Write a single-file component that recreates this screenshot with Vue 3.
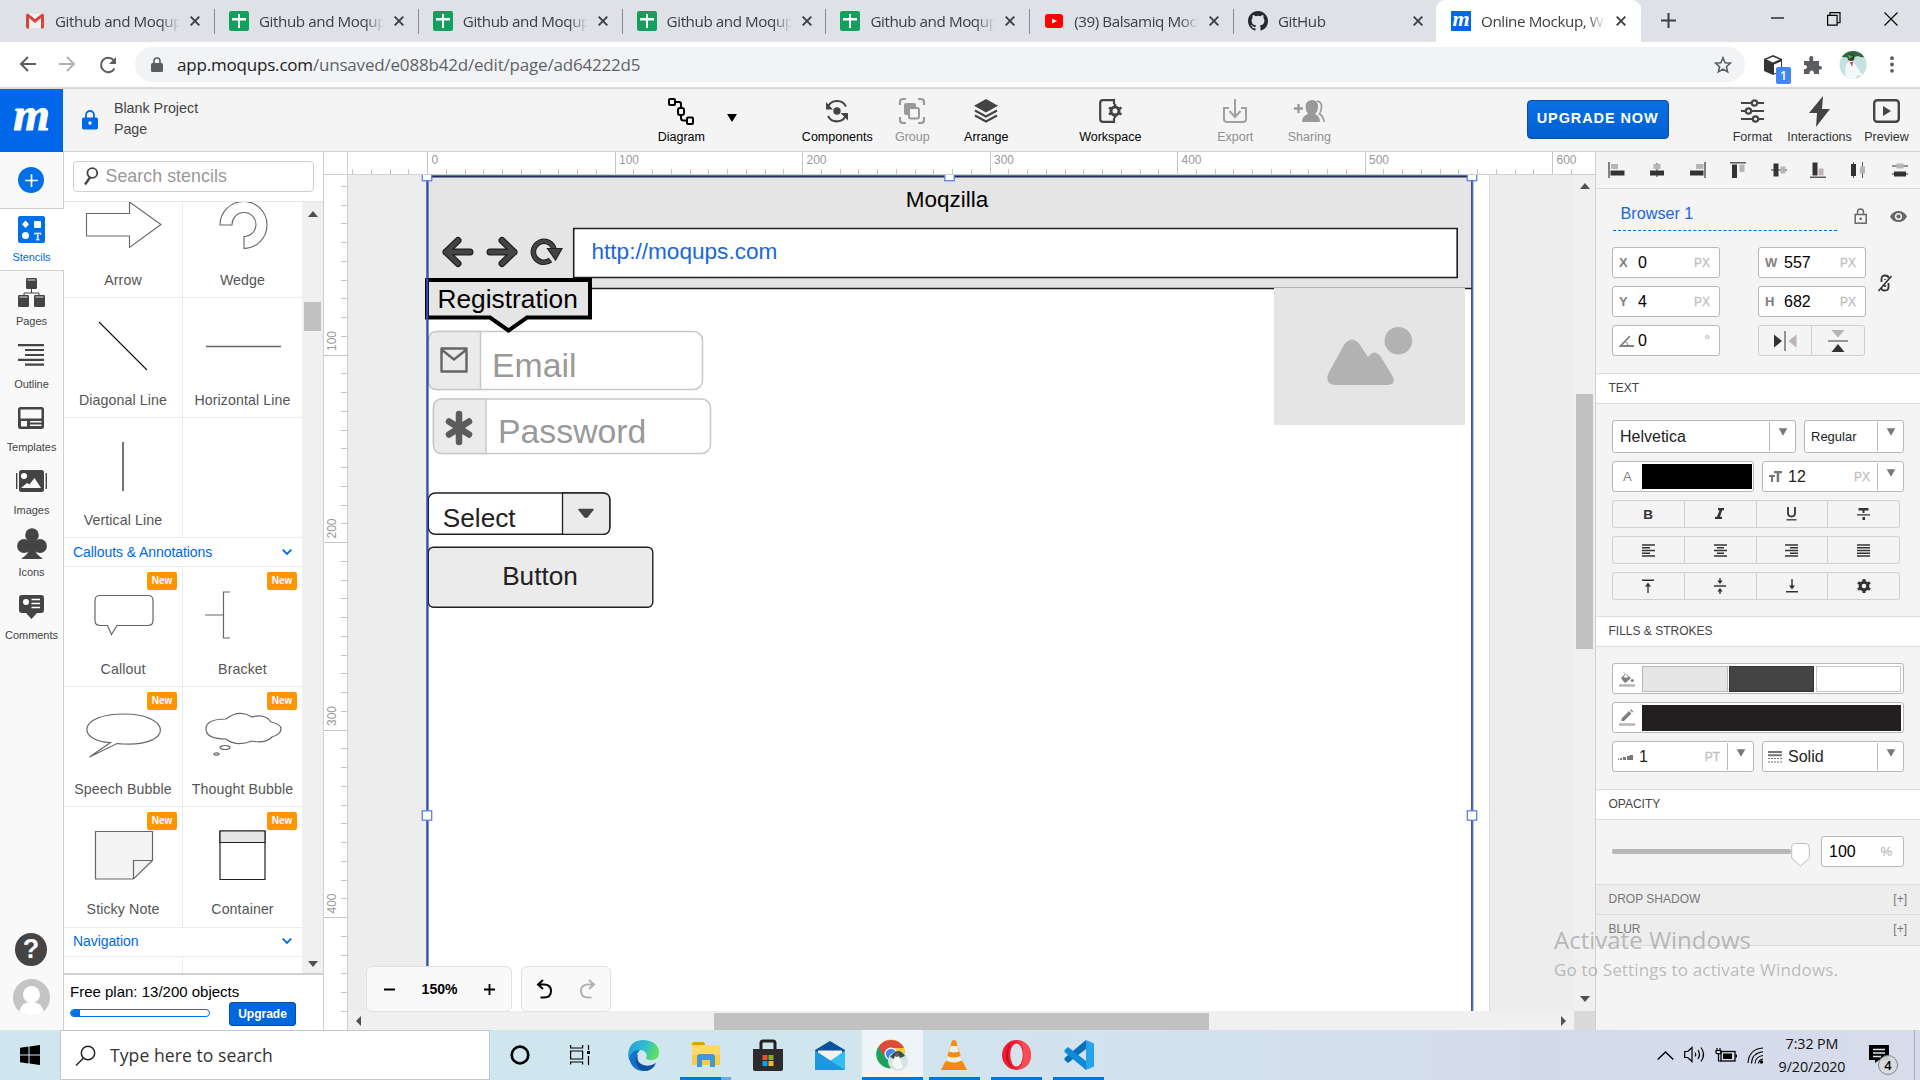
<script setup>
import { h } from 'vue'

/* name: [width, height, svg body] */
const icons = {
  gmail: [18, 16, '<path d="M1 1h16v14H1z" fill="#f2f2f2"/><path d="M0 2v12q0 2 3 1.500V5l6 5 6-5v10.500q3 .5 3-1.500V2Q17 0 15.500 1L9 6 2.500 1Q1 0 0 2z" fill="#d6453a"/>'],
  sheets: [20, 20, '<rect width="20" height="20" rx="2" fill="#12a05c"/><path d="M9 3h2v4h6v2.500h-6V17H9V9.500H3V7h6z" fill="#fff"/>'],
  youtube: [18, 14, '<rect width="18" height="14" rx="3" fill="#f00"/><path d="M7 4.500v5l5-2.500z" fill="#fff"/>'],
  github: [20, 20, '<path transform="scale(1.25)" d="M8 0C3.580 0 0 3.580 0 8c0 3.540 2.290 6.530 5.470 7.590.4.070.55-.17.55-.38 0-.19-.010-.82-.010-1.490-2.010.37-2.530-.49-2.690-.94-.090-.23-.48-.94-.82-1.130-.28-.15-.68-.52-.010-.53.63-.010 1.080.58 1.230.82.72 1.210 1.870.87 2.330.66.070-.52.28-.87.51-1.070-1.780-.2-3.640-.89-3.640-3.950 0-.87.31-1.590.82-2.150-.080-.2-.36-1.020.080-2.120 0 0 .67-.21 2.200.82a7.600 7.600 0 0 1 4 0c1.530-1.040 2.200-.82 2.200-.82.44 1.100.16 1.920.080 2.120.51.56.82 1.270.82 2.150 0 3.070-1.870 3.750-3.650 3.950.29.25.54.73.54 1.480 0 1.070-.010 1.930-.010 2.200 0 .21.15.46.55.38A8 8 0 0 0 16 8c0-4.420-3.580-8-8-8z" fill="#24292e"/>'],
  x: [10, 10, '<path d="M.7.7l8.600 8.600M9.300.7L.7 9.300" stroke="currentColor" stroke-width="1.900"/>'],
  plus: [15, 15, '<path d="M7.500 0v15M0 7.500h15" stroke="currentColor" stroke-width="2"/>'],
  back: [17, 16, '<path d="M17 8H2M9 1L2 8l7 7" fill="none" stroke="currentColor" stroke-width="2"/>'],
  fwd: [17, 16, '<path d="M0 8h15M8 1l7 7-7 7" fill="none" stroke="currentColor" stroke-width="2"/>'],
  reload: [18, 18, '<path d="M15.500 12.500A7.200 7.200 0 1 1 14.500 4" fill="none" stroke="currentColor" stroke-width="2"/><path d="M17 1v7h-7z"/>'],
  lock: [12, 15, '<rect y="6" width="12" height="9" rx="1.500"/><path d="M3 6.500V4a3 3 0 0 1 6 0v2.500" fill="none" stroke="currentColor" stroke-width="1.600"/>'],
  bluelock: [16, 20, '<rect y="7.500" width="16" height="12" rx="1.800"/><path d="M4 8V5a4 4 0 0 1 8 0v3" fill="none" stroke="currentColor" stroke-width="1.800"/><circle cx="8" cy="13" r="1.700" fill="#fff"/>'],
  star: [18, 18, '<path d="M9 1.800l2.100 4.900 5.300.5-4 3.500 1.200 5.200L9 13.100l-4.600 2.800 1.200-5.200-4-3.500 5.300-.5z" fill="none" stroke="currentColor" stroke-width="1.600"/>'],
  cube: [20, 20, '<path d="M10 0l9 4v12l-9 4-9-4V4z" fill="#333"/><path d="M10 1.800L16.500 4.500 10 7.500 3.500 4.500z" fill="#fff"/><path d="M11 9.500l7-3v9l-7 3z" fill="#fff"/>'],
  puzzle: [18, 18, '<path d="M0 5h5.500q-1-5 1.800-5T9 5h6v5q3-.5 3 1.700T15 13.500V18h-5q0-3.500-2.300-3.500T5.500 18H0v-5q3 0 3-2T0 9z"/>'],
  dots: [4, 17, '<circle cx="2" cy="2.200" r="1.900"/><circle cx="2" cy="8.500" r="1.900"/><circle cx="2" cy="14.800" r="1.900"/>'],
  wmin: [13, 13, '<path d="M0 6h13" stroke="#000" stroke-width="1.200"/>'],
  wmax: [14, 14, '<path d="M.6 3.400h9.500v9.800H.6zM3 3V.7h10v10h-2.500" fill="none" stroke="#000" stroke-width="1.200"/>'],
  wclose: [14, 14, '<path d="M.5.5l13 13M13.500.5l-13 13" stroke="#000" stroke-width="1.100"/>'],
  diagram: [26, 27, '<g fill="none" stroke="#000" stroke-width="2"><rect x="1" y="1" width="6" height="6" rx="1"/><rect x="10" y="10" width="6" height="7" rx="2"/><rect x="19" y="19.500" width="6" height="6.500" rx="1"/><path d="M8 4h3q2 0 2 2v4M13 17v3q0 2.500 2.500 2.500H19"/></g>'],
  components: [24, 24, '<circle cx="12" cy="12" r="3.700"/><path d="M2.500 9A10 10 0 0 1 21 7.500M21.500 15A10 10 0 0 1 3 17" fill="none" stroke="currentColor" stroke-width="2"/><path d="M1 3v7.500h7zM23 21.500V14h-7.500z"/>'],
  group: [26, 26, '<path d="M1 7V4q0-3 3-3h3M19 1h3q3 0 3 3v3M25 19v3q0 3-3 3h-3M7 25H4q-3 0-3-3v-3" fill="none" stroke="currentColor" stroke-width="2.200"/><rect x="5" y="5" width="12" height="12" rx="2"/><rect x="10" y="10" width="10" height="10.500" rx="2" fill="#f4f4f4" stroke="currentColor" stroke-width="2"/>'],
  arrange: [24, 24, '<path d="M12 0l12 6.700-12 6.700L0 6.700z"/><path d="M1 11.500l11 6 11-6M1 16.500l11 6 11-6" fill="none" stroke="currentColor" stroke-width="2"/>'],
  workspace: [23, 24, '<path d="M15 5V1.200H4Q1.200 1.200 1.200 4v16q0 2.800 2.800 2.800h11V19" fill="none" stroke="currentColor" stroke-width="2.200"/><circle cx="16" cy="12" r="4" fill="none" stroke="currentColor" stroke-width="3"/><path d="M16 5v3M16 16v3M10 8.500l2 1.500M20 14l2.500 1.500M22.500 8.500L20 10M12 14l-2 1.500" stroke="currentColor" stroke-width="2.500"/>'],
  export: [24, 24, '<path d="M12 0v17M6.500 12l5.500 6 5.500-6M6 9H1v11q0 3 3 3h16q3 0 3-3V9h-5" fill="none" stroke="currentColor" stroke-width="2"/>'],
  sharing: [31, 22, '<path d="M0 8.500h9M4.500 4v9" stroke="currentColor" stroke-width="2.400"/><path d="M18 0q6 0 6 6t-3 8q5 2 5 8H8q0-6 6-8-2.500-3-2.500-8T18 0z"/><path d="M23 1q5 1 4.500 6t-2 7q4 2 4.500 8" fill="none" stroke="currentColor" stroke-width="1.600"/>'],
  format: [23, 24, '<g fill="none" stroke="currentColor" stroke-width="2.200"><path d="M0 4h10M17 4h6M0 12h4M11 12h12M0 20h11M18 20h5"/><circle cx="13.500" cy="4" r="2.700"/><circle cx="7.500" cy="12" r="2.700"/><circle cx="14.500" cy="20" r="2.700"/></g>'],
  bolt: [21, 31, '<path d="M14 0L0 17h8L7 31l14-18h-8z"/>'],
  preview: [27, 24, '<rect x="1.200" y="1.200" width="24.600" height="21.600" rx="3" fill="none" stroke="currentColor" stroke-width="2.400"/><path d="M10 7v10l8-5z"/>'],
  pages: [27, 29, '<rect x="8" width="11" height="11" rx="1.200"/><path d="M9.500 2h8" stroke="#ddd"/><path d="M13.500 11v4M6 18v-3h15v3" fill="none" stroke="currentColor"/><rect y="17" width="11" height="12" rx="1.200"/><rect x="16" y="17" width="11" height="12" rx="1.200"/><path d="M1.500 19h8M17.500 19h8" stroke="#ddd"/>'],
  outline: [27, 22, '<path d="M0 1.200h26M7 6h19M7 11h19M0 15.800h26M7 20.700h19" stroke="currentColor" stroke-width="2.200"/>'],
  templates: [27, 22, '<rect width="26" height="22" rx="2.500"/><path d="M2.500 2.500h21v9h-21zM3 14h6v5.500H3zM12 14h11.500v1.500H12zM12 17.500h11.500v1.500H12z" fill="#f9f9f9"/>'],
  images: [31, 22, '<path d="M.7 3v16M30.300 3v16" stroke="currentColor" stroke-width="1.400"/><rect x="3" width="25" height="22" rx="2.500"/><circle cx="8" cy="6" r="3" fill="#fff"/><path d="M5 18l6-5 2.500 1.500L18.500 8 25 18z" fill="#fff"/>'],
  club: [30, 31, '<circle cx="15" cy="7" r="6.800"/><circle cx="7" cy="18" r="6.900"/><circle cx="23" cy="18" r="6.900"/><path d="M12 10h6l2 8q-3.500 4 1 9 3 2.500 5 4H4q2-1.500 5-4 4.500-5 1-9z"/>'],
  comments: [25, 24, '<path d="M3 0h19q3 0 3 3v12q0 3-3 3h-4l-5.500 6L7 18H3q-3 0-3-3V3q0-3 3-3z"/><circle cx="7" cy="7" r="3" fill="#fff"/><path d="M12.500 4.500H21M12.500 8.500H21M12.500 12.500H21" stroke="#fff" stroke-width="1.300"/>'],
  stencils: [27, 27, '<rect width="27" height="27" rx="2" fill="#0070e8"/><path d="M7.500 4.500L11 8.300l-3.500 3.800L4 8.300z" fill="#fff"/><rect x="16" y="5" width="7" height="7" rx="1" fill="#fff"/><circle cx="7.500" cy="19.500" r="3.500" fill="#fff"/><text x="19.500" y="23.500" text-anchor="middle" font-family="Liberation Serif, serif" font-size="11" fill="#fff" stroke="#fff" stroke-width=".3">T</text>'],
  mag: [14, 19, '<circle cx="8.300" cy="6" r="4.900" fill="none" stroke="currentColor" stroke-width="1.800"/><path d="M6 10.500L1 17.500" stroke="currentColor" stroke-width="2.300"/>'],
  chev: [10, 6, '<path d="M.7.7L5 5l4.300-4.300" fill="none" stroke="currentColor" stroke-width="1.800"/>'],
  tri: [10, 8, '<path d="M0 0h10L5 8z"/>'],
  sUp: [10, 6, '<path d="M5 0L0 6h10z"/>'],
  sDn: [10, 6, '<path d="M0 0h10L5 6z"/>'],
  sL: [5, 10, '<path d="M5 0v10L0 5z"/>'],
  sR: [5, 10, '<path d="M0 0v10l5-5z"/>'],
  undo: [16, 20, '<path d="M7 1L2 5.500 7 10M2 5.500h6q7 0 7 6.500t-7 6.500H4.500" fill="none" stroke="currentColor" stroke-width="2"/>'],
  redo: [16, 20, '<path d="M9 1l5 4.500L9 10M14 5.500H8q-7 0-7 6.500t7 6.500h3.500" fill="none" stroke="currentColor" stroke-width="2"/>'],
  minus: [11, 11, '<path d="M0 5.500h11" stroke="currentColor" stroke-width="2"/>'],
  plus2: [11, 11, '<path d="M0 5.500h11M5.500 0v11" stroke="currentColor" stroke-width="1.800"/>'],
  unlock: [14, 16, '<rect x="1.200" y="6.500" width="11" height="8.700" fill="none" stroke="currentColor" stroke-width="1.500"/><path d="M3.500 6V4Q3.500 1 6.500 1t3 3v2" fill="none" stroke="currentColor" stroke-width="1.400"/><circle cx="6.700" cy="10.800" r="1.300"/>'],
  eye: [17, 11, '<path d="M0 5.500Q3 0 8.500 0T17 5.500Q14 11 8.500 11T0 5.500z"/><circle cx="8.500" cy="5.500" r="3.600" fill="#f4f4f4"/><circle cx="8.500" cy="5.500" r="2.100"/>'],
  unlink: [14, 18, '<path d="M3.500 8V5q0-3.500 3.500-3.500T10.500 4M10.500 9v4q0 3.500-3.500 3.500T3.500 14" fill="none" stroke="currentColor" stroke-width="1.800"/><path d="M7 5v1M7 11v2M13.500 2L.5 17" stroke="currentColor" stroke-width="1.600"/>'],
  al1: [18, 16, '<path d="M1 0v16" stroke="#333" stroke-width="1.200"/><path d="M3 2h7v5H3z" fill="#bab4b2"/><path d="M2.500 8.500h14v5h-14z"/>'],
  al2: [18, 16, '<path d="M9 1v14" stroke="#333"/><path d="M5.500 2h7v5h-7z" fill="#bab4b2"/><path d="M2 8.500h14v5H2z"/>'],
  al3: [18, 16, '<path d="M17 0v16" stroke="#333" stroke-width="1.200"/><path d="M8 2h7.500v5H8z" fill="#bab4b2"/><path d="M2 8.500h13.500v5H2z"/>'],
  al4: [18, 16, '<path d="M1 .8h16" stroke="#333" stroke-width="1.200"/><path d="M10.500 2.500h5V10h-5z" fill="#bab4b2"/><path d="M3 2.500h5V16H3z"/>'],
  al5: [18, 16, '<path d="M1 8h16" stroke="#333"/><path d="M10.500 4.500h5v7h-5z" fill="#bab4b2"/><path d="M3.500 1.500h5v13h-5z"/>'],
  al6: [18, 16, '<path d="M1 15.200h16" stroke="#333" stroke-width="1.200"/><path d="M9.500 6.500h5v7h-5z" fill="#bab4b2"/><path d="M3.500.5h5v13h-5z"/>'],
  al7: [18, 16, '<path d="M4.500 0v16M13.500 0v16" stroke="#555"/><path d="M11 4.500h5v7h-5z" fill="#bab4b2"/><path d="M2 2h5v12H2z"/>'],
  al8: [18, 16, '<path d="M1 4h16M1 12h16" stroke="#333"/><path d="M5.500 1.500h7v5h-7z" fill="#bab4b2"/><path d="M3 9.500h12v5H3z"/>'],
  flipH: [24, 20, '<path d="M1 3.500v13L9 10z"/><path d="M12 0v20" stroke="#333"/><path d="M23.500 3.500v13l-8-6.500z" fill="#bab4b2"/>'],
  flipV: [20, 22, '<path d="M3.500 0h13L10 7.500z" fill="#bab4b2"/><path d="M0 11h20" stroke="#777" stroke-width="1.500"/><path d="M3.500 22h13L10 14z"/>'],
  angle: [15, 12, '<path d="M15 11H1.500L11 1" fill="none" stroke="currentColor" stroke-width="1.800"/><path d="M5 6q4 1 4 5" fill="none" stroke="currentColor"/>'],
  tT: [13, 11, '<path d="M5 0h8v2.200h-2.800V11H7.700V2.200H5zM0 4h6v2H4v5H2V6H0z"/>'],
  bold: [10, 12, '<text x="5" y="11" text-anchor="middle" font-family="Liberation Sans, sans-serif" font-weight="700" font-size="13.500">B</text>'],
  ital: [10, 12, '<path d="M3 0h6v2.200H7.200L5 8.800h2V11H0V8.800h2L4.500 2.200H3z"/>'],
  under: [11, 14, '<path d="M2 0v6q0 3.500 3.500 3.500T9 6V0" fill="none" stroke="currentColor" stroke-width="1.800"/><path d="M.5 12.800h10" stroke="currentColor" stroke-width="1.300"/>'],
  strike: [13, 12, '<path d="M1.500 0h10v2.500h-4V5h-2V2.500h-4zM5.500 9h2.500v3H5.500zM0 6.200h13v1.400H0z"/>'],
  tl: [13, 13, '<path d="M0 1h13M0 3.800h8M0 6.500h13M0 9.200h8M0 12h13" stroke="currentColor" stroke-width="1.400"/>'],
  tc: [13, 13, '<path d="M0 1h13M3 3.800h7M0 6.500h13M3 9.200h7M0 12h13" stroke="currentColor" stroke-width="1.400"/>'],
  tr: [13, 13, '<path d="M0 1h13M5 3.800h8M0 6.500h13M5 9.200h8M0 12h13" stroke="currentColor" stroke-width="1.400"/>'],
  tj: [13, 13, '<path d="M0 1h13M0 3.800h13M0 6.500h13M0 9.200h13M0 12h13" stroke="currentColor" stroke-width="1.400"/>'],
  vt: [12, 14, '<path d="M0 1.200h12M6 14V5" stroke="currentColor" stroke-width="1.400"/><path d="M6 3.500l3 4H3z"/>'],
  vm: [12, 16, '<path d="M0 8h12M6 0v3M6 16v-3" stroke="currentColor" stroke-width="1.400"/><path d="M6 6L3.300 2.500h5.400zM6 10l-2.700 3.500h5.400z"/>'],
  vb: [12, 14, '<path d="M0 12.800h12M6 0v9" stroke="currentColor" stroke-width="1.400"/><path d="M6 10.500L3 6.500h6z"/>'],
  gear: [14, 14, '<circle cx="7" cy="7" r="3.800" fill="none" stroke="currentColor" stroke-width="3"/><path d="M7 0v3M7 11v3M1 3.500L3.500 5M10.500 9L13 10.500M13 3.500L10.500 5M3.500 9L1 10.500" stroke="currentColor" stroke-width="3"/>'],
  bucket: [16, 17, '<path d="M3 1l9 7-5 4.500Q6 13 5 12L2 8l4-4z"/><path d="M4.500 7.500h5L6.500 4z" fill="#fff"/><circle cx="13.300" cy="10.500" r="1.500"/><path d="M0 15.500h16" stroke="#bab4b2" stroke-width="2.500"/>'],
  pencil: [16, 17, '<path d="M2.500 12V9.500L10 2l2.500 2.500L5 12zM11 1l1-.8 2.300 2.300-1 1z"/><path d="M0 15.500h16" stroke="#bab4b2" stroke-width="2.500"/>'],
  weight: [15, 6, '<path d="M0 4.500h1V6H0zM2 4h2v2H2zM5 3h3v3H5zM9 2h2.500v4H9zM11.500 1H15v5h-3.500z"/>'],
  lines: [14, 12, '<path d="M0 1h14M0 4.200h14" stroke="#777" stroke-width="1.900"/><path d="M0 7.500h14M0 11h14" stroke="#777" stroke-width="1.200" stroke-dasharray="2 1"/>'],
  win: [20, 20, '<path d="M0 2.800L8.500 1.600V9.600H0zM9.500 1.400L20 0v9.600H9.500zM0 10.500h8.500v8L0 17.300zM9.500 10.500H20V20L9.500 18.600z" fill="#000"/>'],
  search: [21, 21, '<circle cx="13" cy="8" r="6.700" fill="none" stroke="#222" stroke-width="1.500"/><path d="M8.500 13L1 20.500" stroke="#222" stroke-width="1.500"/>'],
  cortana: [20, 20, '<circle cx="10" cy="10" r="8.300" fill="none" stroke="#000" stroke-width="2.700"/>'],
  taskview: [21, 20, '<path d="M.6 0v3h12V0M.6 6h12v8H.6zM.6 19.500V17h12v2.500M18.500 0v5M18.500 11v9" fill="none" stroke="#000" stroke-width="1.200"/><path d="M17 6h3v3h-3z"/>'],
  edge: [31, 31, '<defs><linearGradient id="eg" x2="1" y2=".3"><stop offset="0" stop-color="#2399d8"/><stop offset=".6" stop-color="#30bfd0"/><stop offset="1" stop-color="#5ede5f"/></linearGradient></defs><path d="M0 15Q1 0 16 0q14 1 15 12 0 8-8 8-5 0-5-2 1.500-2 0-5-2-3-6-3Q4 11 2 21 0 18 0 15z" fill="url(#eg)"/><path d="M1 18Q4 9 12 10q-5 5-3 11 3 7 11 6 5-.5 8-4-4 8-12 8Q4 31 1 18z" fill="#1273c9"/><path d="M10 14q-2 7 3 10 7 4 15-1-4 8-11 8-7-1-9-8-1-6 2-9z" fill="#0c4fa0"/>'],
  folder: [28, 26, '<path d="M0 2q0-2 2-2h9q2 0 2 3h-13z" fill="#e2a100"/><path d="M0 3h28v20H0z" fill="#ffd968"/><path d="M0 13h28v10H0z" fill="#fdca48"/><path d="M5 25V15q0-3 3-3h12q3 0 3 3v10h-5v-7h-8v7z" fill="#3f97dd"/>'],
  store: [30, 31, '<path d="M8 9V3q0-2 2-2h10q2 0 2 2v6" fill="none" stroke="#222" stroke-width="3"/><path d="M0 9h30v20q0 2-2 2H2q-2 0-2-2z" fill="#2c2c2c"/><path d="M9.500 15h5v5h-5z" fill="#f25022"/><path d="M15.500 15h5v5h-5z" fill="#7fba00"/><path d="M9.500 21h5v5h-5z" fill="#00a4ef"/><path d="M15.500 21h5v5h-5z" fill="#ffb900"/>'],
  mail: [30, 29, '<path d="M0 9l15-9 15 9v4H0z" fill="#0a529c"/><path d="M3 9.500h24v8L15 22 3 17z" fill="#f3f3f3"/><path d="M0 9.500L15 20 30 9.500V29H0z" fill="#35bdf0"/><path d="M0 9.500L30 29H0z" fill="#1e96e0"/>'],
  chrome: [32, 32, '<circle cx="15" cy="15" r="14.500" fill="#fbc934"/><path d="M2 9A14.500 14.500 0 0 1 28 9H15l-6 9z" fill="#dc4a3e"/><path d="M2 8a14.500 14.500 0 0 0 12 21.500l6-10-11-2z" fill="#1ba260"/><circle cx="15" cy="15" r="6.500" fill="#fff"/><circle cx="15" cy="15" r="5.200" fill="#4285f4"/><circle cx="22" cy="22" r="10" fill="#d7e3e0"/><path d="M14 18q4-6 8-6t7 5l-5 2-3-3-3 4z" fill="#355346"/><path d="M19 17h4l4 12-7 1-4-5z" fill="#f5f8f8"/><circle cx="21" cy="16" r="2" fill="#7d5e4e"/>'],
  vlc: [26, 30, '<path d="M4 22h18l4 8H0z" fill="#f18a10"/><path d="M13 0q2 0 2.500 2L22 24q-9 6-18 0L10.500 2Q11 0 13 0z" fill="#f48b14"/><path d="M9.500 6h7l1.500 5.500q-5 2-10 0zM6.500 16q6 3 13 0l1.500 4.500q-8 4-16 0z" fill="#eee"/>'],
  opera: [29, 30, '<ellipse cx="14.500" cy="15" rx="14.500" ry="15" fill="#f01c30"/><path d="M14.500 1q14.500 0 14.500 14T14.500 29q7-2 7-14t-7-14z" fill="#fb4b55"/><path d="M8 26q-4-5-4-11T9 3q-3 6-3 12t5 14z" fill="#c80c20"/><ellipse cx="14.500" cy="15" rx="6.300" ry="11.500" fill="#d3e4ee"/>'],
  vscode: [30, 30, '<path d="M22 0v9L4 23l-3.500-3v-2z" fill="#0a70b8"/><path d="M22 30v-9L4 7 .5 10v2z" fill="#0f8ad6"/><path d="M22 0l8 3.500v23L22 30z" fill="#27a3ee"/>'],
  up: [17, 9, '<path d="M.7 8.500L8.500 1l7.800 7.500" fill="none" stroke="#000" stroke-width="1.400"/>'],
  speaker: [21, 18, '<path d="M.7 5.500h3L8 1.500v14l-4.300-4h-3zM11 6.500q1.500 2 0 4M14 4q3 4.500 0 9M17 1.500q5 7 0 14" fill="none" stroke="#000" stroke-width="1.200"/>'],
  battery: [21, 14, '<rect x="5" y="3.500" width="14" height="9.500" fill="none" stroke="#000" stroke-width="1.300"/><path d="M7 5.500h9v5.500H7zM19.500 6.500H21v3h-1.500z"/><path d="M1 0v2M4 0v2M0 2.500h5v2.500q-2.500 2-5 0zM2.500 5v8H5" fill="none" stroke="#000" stroke-width="1.200"/>'],
  wifi: [17, 17, '<g fill="none" stroke="#000" stroke-width="1.100"><path d="M1 16Q2 2 16 1M4.500 16.500Q5 6 16 4.800M8 16.500Q8.500 9.500 16 8.500M11.500 16.500q.5-4 4.500-4.500"/></g><circle cx="14.500" cy="15" r="1.700"/>'],
  notif: [20, 18, '<path d="M0 0h20v15H10l-4 3v-3H0z" fill="#000"/><path d="M4 4.500h12M4 8h12M4 11.500h8" stroke="#dfe5ee" stroke-width="1.300"/>'],
}
const Ico = ({ n }) => {
  const [w, ht, body] = icons[n]
  return h('svg', { width: w, height: ht, viewBox: `0 0 ${w} ${ht}`, fill: 'currentColor', innerHTML: body, style: 'display:block;flex:none;overflow:visible' })
}
Ico.props = ['n']

const tabs = [
  { i: 'gmail', t: 'Github and Moqups' }, { i: 'sheets', t: 'Github and Moqups' }, { i: 'sheets', t: 'Github and Moqups' },
  { i: 'sheets', t: 'Github and Moqups' }, { i: 'sheets', t: 'Github and Moqups' }, { i: 'youtube', t: '(39) Balsamiq Mockups' }, { i: 'github', t: 'GitHub' },
]
const rail = [['pages', 'Pages'], ['outline', 'Outline'], ['templates', 'Templates'], ['images', 'Images'], ['club', 'Icons'], ['comments', 'Comments']]
const shapes = [
  { t: 'Arrow', d: 'M22.500 35.500h43V24L97 46.500 65.500 69.500V58h-43z' },
  { t: 'Wedge', d: 'M36 47a23.500 23.500 0 1 1 24 23.500V58.500A12 12 0 1 0 48 47z' },
  { t: 'Diagonal Line', d: 'M35 24l48 48', s: '#111' },
  { t: 'Horizontal Line', d: 'M22 48.500h75', w: 1.6 },
  { t: 'Vertical Line', d: 'M59 24v49', w: 1.8 },
  { t: '', d: '' },
]
const callouts = [
  { t: 'Callout', d: 'M35 28.500h49q5 0 5 5v20q0 5-5 5H53l-5.500 9-4-9H36q-5 0-5-5v-20q0-5 5-5z' },
  { t: 'Bracket', d: 'M46 25h-6.500v46H46M39.500 48H21' },
  { t: 'Speech Bubble', d: 'M46.500 55.500C13 54 13 27 60 27s50 32 0 30q-4 0-7-.5L25.500 70z' },
  { t: 'Thought Bubble', d: 'M42 32q13-10 26-2 13-4 19 5 10 2 10 7t-9 8q-7 7-20 4-16 6-26-2-20 0-20-10t20-10zM36 60.500a5 2 0 1 0 10 0a5 2 0 1 0-10 0M30 67a2.500 1.200 0 1 0 5 0a2.500 1.200 0 1 0-5 0' },
  { t: 'Sticky Note', d: 'M31.500 24.500h57v29L69.500 72h-38zM69.500 72V53.500h19', f: '#f4f4f4' },
  { t: 'Container', d: 'M36 24h45v48.500H36z', s: '#231f20', c: 1 },
]
const hticks = Array.from({ length: 66 }, (_, i) => i - 4).map(i => ({ i, x: 427.5 + i * 18.75 })).filter(t => t.x < 1595)
const vticks = Array.from({ length: 46 }, (_, i) => i + 1).map(i => ({ i, y: 167.5 + i * 18.75 })).filter(t => t.y < 1030 && t.y > 175)
const tools = [
  ['diagram', 'Diagram', 0, '#000'], ['components', 'Components', 82, '#444'], ['group', 'Group', 1, '#999'], ['arrange', 'Arrange', 0, '#444'],
  ['workspace', 'Workspace', 50, '#444'], ['export', 'Export', 51, '#a0a0a0'], ['sharing', 'Sharing', 0, '#999'],
]
const aligns = [['al1', 0], ['al2', 22], ['al3', 22], ['al4', 23], ['al5', 23], ['al6', 21], ['al7', 22], ['al8', 24]]
const btnRows = [['bold', 'ital', 'under', 'strike'], ['tl', 'tc', 'tr', 'tj'], ['vt', 'vm', 'vb', 'gear']]
const apps = [['edge', 0], ['folder', 1], ['store', 0], ['mail', 0], ['chrome', 2], ['vlc', 1], ['opera', 1], ['vscode', 1]]
</script>

<template>
  <div class="screen">
    <div class="tabstrip">
      <div v-for="(t, k) in tabs" :key="k" class="tab" :class="{ last: k === 6 }">
        <span class="fav"><Ico :n="t.i" /></span><span class="tt">{{ t.t }}</span><Ico n="x" />
      </div>
      <div class="tab active">
        <span class="fav mfav">m</span><span class="tt">Online Mockup, Wireframe</span><Ico n="x" />
      </div>
      <div class="newtab"><Ico n="plus" /></div>
      <div class="winbtns"><Ico n="wmin" /><Ico n="wmax" /><Ico n="wclose" /></div>
    </div>
    <div class="urlbar">
      <div class="nav"><Ico n="back" /><Ico n="fwd" class="dim" /><Ico n="reload" /></div>
      <div class="omni">
        <Ico n="lock" /><span class="url"><b>app.moqups.com</b>/unsaved/e088b42d/edit/page/ad64222d5</span><Ico n="star" class="staric" />
      </div>
      <div class="ext"><Ico n="cube" /><span class="badge">1</span></div>
      <Ico n="puzzle" class="puz" />
      <svg class="ava" width="28" height="34" viewBox="0 0 28 34"><defs><clipPath id="ac"><ellipse cx="14" cy="17" rx="13.500" ry="14" /></clipPath></defs><g clip-path="url(#ac)"><rect y="3" width="28" height="28" fill="#c5e2e0" /><path d="M0 3h28v6q-6 1-9-1-9 3-19 0z" fill="#2c6a3b" /><path d="M7 17l4-5 5 4 6 9 4 4-8-2-1 5H7l-1-10z" fill="#f3f8f9" /><circle cx="12" cy="9.500" r="3.500" fill="#4a3533" /><path d="M9 7l5 1-4 3z" fill="#36bd65" /><path d="M11 14l2 5 1-5z" fill="#b2454d" /></g></svg>
      <Ico n="dots" class="kebab" />
    </div>

    <div class="header">
      <div class="logo">m</div>
      <Ico n="bluelock" class="hlock" />
      <div class="ptitle"><span>Blank Project</span><span>Page</span></div>
      <div class="tools">
        <template v-for="(t, k) in tools" :key="t[0]">
          <div class="tool" :class="{ off: t[3][1] > '8' }" :style="{ marginLeft: t[2] - (k === 1 ? 20 : 0) + 'px', '--ic': t[3] }"><span class="ti"><Ico :n="t[0]" /></span>{{ t[1] }}</div>
          <Ico v-if="k === 0" n="tri" class="caret" />
        </template>
      </div>
      <div class="upnow">UPGRADE NOW</div>
      <div class="tools right">
        <div v-for="t in [['format', 'Format'], ['bolt', 'Interactions'], ['preview', 'Preview']]" :key="t[0]" class="tool r"><span class="ti"><Ico :n="t[0]" /></span>{{ t[1] }}</div>
      </div>
    </div>

    <div class="main">
      <div class="rail">
        <div class="addbox"><span class="add"><Ico n="plus" /></span></div>
        <div class="ritem on"><span class="ri"><Ico n="stencils" /></span>Stencils</div>
        <div v-for="r in rail" :key="r[0]" class="ritem"><span class="ri"><Ico :n="r[0]" /></span>{{ r[1] }}</div>
        <div class="help">?</div>
        <svg class="user" width="37" height="37" viewBox="0 0 37 37"><defs><clipPath id="uc"><circle cx="18.500" cy="18.500" r="18.500" /></clipPath></defs><g clip-path="url(#uc)"><rect width="37" height="37" fill="#c4c4c4" /><circle cx="18.500" cy="15.500" r="8.500" fill="#fff" /><path d="M6 37q0-14 12.500-14T31 37z" fill="#fff" /></g></svg>
      </div>

      <div class="stencils">
        <div class="searchwrap"><div class="sbox"><Ico n="mag" />Search stencils</div></div>
        <div class="list">
          <div class="cells">
            <div class="grid first">
              <div v-for="s in shapes" :key="s.t" class="cell">
                <svg width="118" height="84"><path :d="s.d" fill="none" :stroke="s.s || '#666'" :stroke-width="s.w || 1.1" /></svg><span>{{ s.t }}</span>
              </div>
            </div>
            <div class="cat">Callouts &amp; Annotations<Ico n="chev" /></div>
            <div class="grid">
              <div v-for="s in callouts" :key="s.t" class="cell">
                <svg width="118" height="84"><path :d="s.d" :fill="s.f || 'none'" :stroke="s.s || '#666'" stroke-width="1.200" /><template v-if="s.c"><path d="M36 24h45v11.500H36z" fill="#e5e5e5" stroke="#231f20" stroke-width="1.200" /></template></svg><span>{{ s.t }}</span><i class="new">New</i>
              </div>
            </div>
            <div class="cat nv">Navigation<Ico n="chev" /></div>
            <div class="grid tail"><div class="cell" /><div class="cell" /></div>
          </div>
          <div class="sbar"><Ico n="sUp" /><div class="thumb" /><Ico n="sDn" class="dn" /></div>
        </div>
        <div class="plan">
          <div class="ptext">Free plan: 13/200 objects</div>
          <div class="prow"><div class="meter"><div class="fill" /></div><div class="upg">Upgrade</div></div>
        </div>
      </div>

      <div class="center">
        <svg class="rulerh" width="1271" height="23" viewBox="324 152 1271 23">
          <path d="M324 174.500h1271" stroke="#cfcfcf" />
          <path d="M347.500 152v22" stroke="#cfcfcf" />
          <template v-for="t in hticks" :key="t.i">
            <path :d="`M${Math.floor(t.x) + .5} ${t.i % 10 ? 169 : 152}V174`" stroke="#c4c4c4" />
            <text v-if="t.i % 10 === 0" :x="t.x + 4" y="163.500" class="rt">{{ t.i * 10 }}</text>
          </template>
        </svg>
        <div class="crow">
          <svg class="rulerv" width="24" height="855" viewBox="324 175 24 855">
            <path d="M347.500 175v855" stroke="#cfcfcf" />
            <template v-for="t in vticks" :key="t.i">
              <path :d="`M${t.i % 10 ? 341 : 324} ${Math.floor(t.y) + .5}H347`" stroke="#c4c4c4" />
              <text v-if="t.i % 10 === 0" :transform="`translate(335.500 ${t.y - 4}) rotate(-90)`" class="rt">{{ t.i * 10 }}</text>
            </template>
          </svg>
          <div class="work">
            <div class="wtop">
              <svg class="canvas" width="1226" height="836" viewBox="348 175 1226 836">
                <path d="M427 175h1062v836H427z" fill="#fff" /><path d="M1489.500 175v836" stroke="#dcdcdc" />
                <path d="M428 176h1044v112.500H428z" fill="#e5e5e5" /><path d="M428 288.500h1044" stroke="#231f20" stroke-width="1.500" />
                <text x="947" y="207" text-anchor="middle" font-size="22.500">Moqzilla</text>
                <g fill="none" stroke="#222" stroke-width="7" stroke-linecap="round" stroke-linejoin="round"><path d="M470 252h-24M458 240.500l-12 11.500L458 263.500" /><path d="M490 252h24M502 240.500l12 11.500L502 263.500" /></g>
                <g fill="none" stroke="#444" stroke-width="4.500" stroke-linecap="round" stroke-linejoin="round"><path d="M470 252h-24M458 240.500l-12 11.500L458 263.500" /><path d="M490 252h24M502 240.500l12 11.500L502 263.500" /></g>
                <path d="M550.500 260A10.500 10.500 0 1 1 554 249" fill="none" stroke="#222" stroke-width="5.500" /><path d="M550.500 260A10.500 10.500 0 1 1 554 249" fill="none" stroke="#444" stroke-width="3.500" />
                <path d="M547.500 248.500h14.500L555.500 260z" fill="#444" stroke="#222" stroke-width="1.200" />
                <path d="M573.700 228.500h883.500v49H573.700z" fill="#fff" stroke="#231f20" stroke-width="1.600" />
                <text x="591.500" y="259.300" font-size="22.600" fill="#1a67d8">http://moqups.com</text>
                <rect x="428.500" y="331.500" width="274" height="58" rx="9" fill="#fff" stroke="#c8c8c8" stroke-width="1.500" />
                <path d="M480.500 331.500H437q-8.500 0-8.500 9v40q0 9 8.500 9h43.500z" fill="#ebebeb" stroke="#c8c8c8" stroke-width="1.500" />
                <path d="M441.500 348.500h25v23h-25zM441.500 349.500l12.500 10 12.500-10" fill="none" stroke="#666" stroke-width="2.400" stroke-linejoin="round" />
                <text x="492" y="376.800" font-size="33.800" fill="#999">Email</text>
                <rect x="433.500" y="399" width="277" height="54.500" rx="9" fill="#fff" stroke="#c8c8c8" stroke-width="1.500" />
                <path d="M486 399h-43.500q-9 0-9 9v36.500q0 9 9 9H486z" fill="#ebebeb" stroke="#c8c8c8" stroke-width="1.500" />
                <path d="M459 414v28M449 421.500l20 13M469 421.500l-20 13" stroke="#5c5c5c" stroke-width="6.500" stroke-linecap="round" />
                <text x="498" y="442.800" font-size="33.800" fill="#999">Password</text>
                <rect x="428.300" y="493" width="181.500" height="41.300" rx="7" fill="#fff" stroke="#231f20" stroke-width="1.500" />
                <path d="M562.500 493h40.300q7 0 7 7v27.300q0 7-7 7h-40.300z" fill="#ebebeb" stroke="#231f20" stroke-width="1.300" /><path d="M579 509.500h14l-6 7.500h-2z" fill="#444" stroke="#444" stroke-width="1.500" stroke-linejoin="round" />
                <text x="442.800" y="526.500" font-size="26.200" fill="#222">Select</text>
                <rect x="428.300" y="547.300" width="224.500" height="60" rx="5" fill="#ebebeb" stroke="#231f20" stroke-width="1.400" />
                <text x="540" y="584.500" font-size="26.200" text-anchor="middle" fill="#222">Button</text>
                <path d="M427 280h163v37.500h-63l-18.500 13-18.500-13H427z" fill="#e5e5e5" stroke="#000" stroke-width="4" />
                <text x="437.500" y="307.500" font-size="26.300">Registration</text>
                <path d="M1274 288h191v137h-191z" fill="#e5e5e5" />
                <circle cx="1398.300" cy="340.700" r="13.800" fill="#b2b2b2" /><path d="M1328 374l16-29q8-11 16 0l8 12q6-9 13 0l12 20q3 7-5 8h-53q-10-1-7-11z" fill="#b2b2b2" />
                <path d="M427.500 1011V176.500h1044.700V1011" fill="none" stroke="#222b55" stroke-width="2" /><path d="M427 1011V175.500h1045.500V1011" fill="none" stroke="#4169e1" stroke-width="1.200" />
                <g fill="#fff" stroke="#5b80e6" stroke-width="1.300"><rect v-for="p in [[427, 176], [949.500, 176], [1472, 176], [427, 815.500], [1472, 815.500]]" :key="p.join()" :x="p[0] - 4.700" :y="p[1] - 4.700" width="9.400" height="9.400" /></g>
              </svg>
              <div class="vbar"><Ico n="sUp" /><div class="vth" /><Ico n="sDn" class="dn" /></div>
            </div>
            <div class="hbar"><Ico n="sL" /><div class="hth" /><Ico n="sR" class="hr" /><div class="corner" /></div>
            <div class="zoomctl">
              <div class="zb"><Ico n="minus" /><b>150%</b><Ico n="plus2" /></div>
              <div class="zb u"><Ico n="undo" /><Ico n="redo" class="dim" /></div>
            </div>
          </div>
        </div>
      </div>

      <div class="props">
        <div class="aligns"><Ico v-for="a in aligns" :key="a[0]" :n="a[0]" :style="{ marginLeft: a[1] + 'px' }" /></div>
        <div class="namerow"><div class="oname">Browser 1</div><Ico n="unlock" class="unl" /><Ico n="eye" class="eye" /></div>
        <div class="geo">
          <div class="gcol">
            <div class="inp"><em>X</em>0<u>PX</u></div><div class="inp"><em>Y</em>4<u>PX</u></div><div class="inp"><em><Ico n="angle" /></em>0<u class="deg">°</u></div>
          </div>
          <div class="gcol">
            <div class="inp"><em>W</em>557<u>PX</u></div><div class="inp"><em>H</em>682<u>PX</u></div><div class="flip"><span><Ico n="flipH" /></span><span><Ico n="flipV" /></span></div>
          </div>
          <Ico n="unlink" class="unlink" />
        </div>
        <div class="sec">TEXT</div>
        <div class="pbody text">
          <div class="prow2"><div class="sel f1">Helvetica<s><Ico n="tri" /></s></div><div class="sel f2">Regular<s><Ico n="tri" /></s></div></div>
          <div class="prow2"><div class="inp color"><em>A</em><div class="sw blk" /></div><div class="sel f3"><Ico n="tT" /><span>12</span><u class="near">PX</u><s><Ico n="tri" /></s></div></div>
          <div v-for="(r, k) in btnRows" :key="k" class="bgroup"><span v-for="b in r" :key="b"><Ico :n="b" /></span></div>
        </div>
        <div class="sec">FILLS &amp; STROKES</div>
        <div class="pbody fills">
          <div class="inp wide"><em><Ico n="bucket" /></em><div class="sw s1" /><div class="sw s2" /><div class="sw s3" /></div>
          <div class="inp wide"><em><Ico n="pencil" /></em><div class="sw s4" /></div>
          <div class="prow2"><div class="sel f3"><Ico n="weight" class="wt" /><span>1</span><u class="near">PT</u><s><Ico n="tri" /></s></div><div class="sel f3"><Ico n="lines" class="wt" /><span>Solid</span><s><Ico n="tri" /></s></div></div>
        </div>
        <div class="sec">OPACITY</div>
        <div class="opac"><div class="track" /><svg width="19" height="24" viewBox="0 0 19 24"><path d="M.7 4.500q0-4 4-4h9.600q4 0 4 4V15l-8.800 8L.7 15z" fill="#fff" stroke="#bdbdbd" /></svg><div class="inp op">100<u>%</u></div></div>
        <div class="sec shut">DROP SHADOW<span>[+]</span></div>
        <div class="sec shut end">BLUR<span>[+]</span></div>
      </div>
    </div>

    <div class="taskbar">
      <div class="start"><Ico n="win" /></div>
      <div class="tsearch"><Ico n="search" />Type here to search</div>
      <div class="tk c"><Ico n="cortana" /></div>
      <div class="tk v"><Ico n="taskview" /></div>
      <div v-for="a in apps" :key="a[0]" class="tk" :class="{ run: a[1] === 1, act: a[1] === 2, multi: a[0] === 'folder' }"><Ico :n="a[0]" /></div>
      <div class="tray"><Ico n="up" /><Ico n="speaker" /><Ico n="battery" /><Ico n="wifi" /></div>
      <div class="clock"><span>7:32 PM</span><span>9/20/2020</span></div>
      <div class="nt"><Ico n="notif" /><i>4</i></div>
    </div>
    <div class="wmark"><div>Activate Windows</div><p>Go to Settings to activate Windows.</p></div>
  </div>
</template>

<style>
body { margin: 0; overflow: hidden; }
</style>
<style scoped>
* { box-sizing: border-box; }
.screen { position: relative; width: 1920px; height: 1080px; display: flex; flex-direction: column; font-family: "Liberation Sans", Arial, sans-serif; overflow: hidden; background: #fff; color: #000; }
.tabstrip { height: 42px; background: #dee1e6; display: flex; font: 15.200px "Open Sans", sans-serif; letter-spacing: -.42px; color: #45494d; }
.tab { width: 203.800px; height: 42px; padding-left: 14px; display: flex; align-items: center; position: relative; color: #3c4043; flex: none; }
.tab:first-child { width: 215px; padding-left: 25px; }
.tab::after { content: ""; position: absolute; right: 0; top: 9px; height: 25px; width: 1px; background: #8a8d92; }
.tab.last { width: 202px; }
.tab.last::after, .tab.active::after { display: none; }
.tab.active { width: 205px; background: #fff; border-radius: 9px 9px 0 0; padding-left: 15px; }
.fav { width: 20px; display: flex; justify-content: center; margin-right: 10px; flex: none; }
.mfav { background: #0068e8; height: 20px; color: #fff; font: italic bold 22px/15px "Liberation Serif", serif; letter-spacing: 0; }
.tt { width: 126px; white-space: nowrap; overflow: hidden; margin: -1px 9px 0 0; -webkit-mask-image: linear-gradient(90deg, #000 84%, transparent 99%); mask-image: linear-gradient(90deg, #000 84%, transparent 99%); }
.newtab { padding: 13px 0 0 20px; color: #3c4043; }
.winbtns { margin-left: auto; display: flex; gap: 43px; padding: 12px 22px 0 0; }
.urlbar { height: 47px; border-bottom: 2px solid #d8dae0; display: flex; align-items: center; color: #5a5d61; }
.nav { display: flex; gap: 23px; width: 135px; padding-left: 19px; }
.dim { color: #b0b2b5; }
.omni { width: 1610px; height: 35px; border-radius: 18px; background: #f1f3f4; display: flex; align-items: center; padding-left: 16px; }
.url { font: 17px "Open Sans", sans-serif; letter-spacing: -.19px; margin-left: 14px; color: #5f6368; }
.url b { font-weight: 400; color: #202124; }
.staric { margin-left: auto; margin-right: 13px; }
.ext { position: relative; margin-left: 18px; }
.badge { position: absolute; left: 13px; top: 12px; width: 15px; height: 17px; border-radius: 2px; background: #4285f4; color: #fff; font: 600 12px/18px "Open Sans", sans-serif; text-align: center; }
.puz { margin-left: 21px; }
.ava { margin-left: 17px; }
.kebab { margin-left: 23px; }
.header { height: 63px; background: #f4f4f4; border-bottom: 1px solid #cfcfcf; display: flex; }
.logo { width: 63px; height: 63px; background: #0068e8; color: #fff; font: italic bold 47px/50px "Liberation Serif", serif; text-align: center; -webkit-text-stroke: .8px #fff; }
.hlock { margin: 21px 0 0 19px; color: #0068e8; }
.ptitle { margin: 9px 0 0 16px; width: 531.500px; display: flex; flex-direction: column; font-size: 14.300px; line-height: 21px; color: #444; }
.tools { display: flex; width: 702px; position: relative; }
.tool { width: 74px; flex: none; display: flex; flex-direction: column; align-items: center; font-size: 12.500px; line-height: 15px; padding-top: 5px; color: #000; }
.tool.off { color: #8f8f8f; }
.ti { height: 34px; margin-bottom: 2px; display: flex; align-items: center; color: var(--ic, #444); }
.caret { margin: 25px 0 0 9px; }
.tools .tool:nth-child(3) { margin-left: 63px !important; }
.upnow { width: 142px; height: 39px; margin: 11px 0 0 180.500px; border-radius: 4px; background: linear-gradient(#0a70e6, #005fd0); border: 1px solid #0a4ea8; color: #fff; font-weight: 700; font-size: 14.500px; line-height: 35px; text-align: center; letter-spacing: .9px; white-space: nowrap; }
.tools.right { width: auto; margin-left: 50.500px; }
.tools.right .tool.r { width: 67px; color: #333; margin-left: 0 !important; }
.main { height: 878px; display: flex; }
.rail { width: 64px; background: #f9f9f9; border-right: 1px solid #cfcfcf; display: flex; flex-direction: column; align-items: center; }
.addbox { height: 56px; width: 100%; padding: 15px 0 0 18px; }
.add { width: 26px; height: 26px; border-radius: 50%; background: #0070e8; color: #fff; display: flex; align-items: center; justify-content: center; }
.add svg { transform: scale(.85); }
.ritem { height: 62.900px; width: 63px; display: flex; flex-direction: column; align-items: center; font-size: 11px; line-height: 14px; color: #444; letter-spacing: -.05px; }
.ritem svg { color: #444; }
.ri { height: 43px; display: flex; align-items: center; }
.ritem.on { background: #fff; border-top: 1px solid #cfcfcf; border-bottom: 1px solid #cfcfcf; width: 64px; margin-right: -1px; padding-right: 1px; color: #0068e8; }
.ritem.on .ri { height: 42px; margin-top: -1px; }
.ritem.on { line-height: 15px; }
.help { margin-top: 285px; width: 32px; height: 33px; border-radius: 50%; background: #444; color: #fff; font-weight: 700; font-size: 27px; line-height: 33px; text-align: center; flex: none; margin-right: 1px; }
.user { margin-top: 13px; margin-right: 1px; flex: none; }
.stencils { width: 260px; border-right: 1px solid #cfcfcf; display: flex; flex-direction: column; background: #fff; }
.searchwrap { height: 50px; border-bottom: 1px solid #e8e8e8; padding: 9px; flex: none; }
.sbox { width: 241px; height: 31px; border: 1px solid #cfcfcf; border-radius: 4px; display: flex; align-items: center; gap: 8px; padding-left: 9.500px; font-size: 17.800px; color: #999; letter-spacing: .05px; }
.sbox svg { color: #444; }
.list { height: 771px; display: flex; overflow: hidden; flex: none; }
.cells { width: 238px; overflow: hidden; }
.grid { display: grid; grid-template-columns: 119px 119px; grid-auto-rows: 120.200px; }
.grid.first { margin-top: -24px; grid-auto-rows: 120px; }
.cell { border-right: 1px solid #ebebeb; border-bottom: 1px solid #ebebeb; position: relative; display: flex; flex-direction: column; align-items: center; font-size: 14.200px; letter-spacing: .1px; color: #555; }
.cell:nth-child(even) { border-right: none; }
.cell svg { width: 118px; height: 94px; flex: none; }
.new { position: absolute; right: 5px; top: 5px; width: 30px; height: 18px; border-radius: 2px; background: #ff9500; color: #fff; font: bold 10px/18px "Liberation Sans", sans-serif; letter-spacing: 0; text-align: center; }
.cat { height: 29px; border-bottom: 1px solid #ebebeb; display: flex; align-items: center; justify-content: space-between; padding: 0 10px 1px 9px; font-size: 14px; letter-spacing: -.08px; color: #0068e8; }
.grid.tail .cell { border-bottom: none; }
.sbar { width: 21px; background: #f0f0f0; display: flex; flex-direction: column; align-items: center; padding-top: 9px; color: #505050; }
.thumb { width: 17px; height: 29px; background: #c1c1c1; margin-top: 85px; }
.sbar .dn { margin-top: auto; margin-bottom: 6px; }
.plan { border-top: 2px solid #cfcfcf; flex: 1; padding: 8px 0 0 6px; }
.ptext { font-size: 15px; line-height: 18px; }
.prow { display: flex; }
.meter { width: 140px; height: 8px; border: 1px solid #0070e8; border-radius: 4px; margin-top: 8px; overflow: hidden; }
.fill { width: 9px; height: 8px; background: #0070e8; }
.upg { width: 67px; height: 24px; margin: 1px 0 0 19px; border: 1px solid #0a4ea8; border-radius: 3px; background: #0068dc; color: #fff; font-weight: 700; font-size: 12px; line-height: 22px; text-align: center; }
.center { width: 1271px; display: flex; flex-direction: column; background: #fff; }
.center svg { display: block; flex: none; }
.rt { font-size: 12px; fill: #999; }
.crow { display: flex; }
.work { width: 1247px; position: relative; }
.wtop { display: flex; height: 836px; }
.canvas { background: #ededed; }
.vbar { width: 21px; background: #f0f0f0; display: flex; flex-direction: column; align-items: center; padding-top: 8px; color: #505050; }
.vth { width: 17px; height: 255px; background: #c1c1c1; margin-top: 205px; }
.vbar .dn { margin-top: auto; margin-bottom: 9px; }
.hbar { height: 19px; background: #f0f0f0; display: flex; align-items: center; padding-left: 8px; color: #505050; }
.hth { width: 495px; height: 17px; background: #c1c1c1; margin: 2px 0 0 353px; }
.hr { margin-left: 352px; }
.corner { width: 21px; height: 19px; background: #dadada; margin-left: auto; }
.zoomctl { position: absolute; left: 18px; top: 791px; display: flex; gap: 9px; }
.zb { height: 46px; width: 146px; border: 1px solid #e0e0e0; border-radius: 6px; background: #f9f9f9; display: flex; align-items: center; justify-content: space-between; padding: 0 16px 0 17px; font-size: 14px; }
.zb.u { width: 90px; padding: 0 14px; }
.props { width: 325px; border-left: 1px solid #cfcfcf; background: #f4f4f4; }
.aligns { height: 37px; border-bottom: 1px solid #dcdcdc; display: flex; align-items: center; padding-left: 12px; color: #333; }
.namerow { display: flex; height: 58px; color: #666; }
.oname { width: 224px; height: 42px; margin-left: 17px; padding: 15px 0 0 7.500px; border-bottom: 1px dashed #0070e8; font-size: 16.200px; line-height: 18px; color: #1a67d8; }
.unl { margin: 19px 0 0 17px; }
.eye { margin: 22px 0 0 22px; }
.geo { display: flex; padding-left: 16px; height: 126px; }
.gcol { display: flex; flex-direction: column; gap: 8px; margin-right: 38px; }
.gcol + .gcol { margin-right: 12px; }
.inp { width: 108px; height: 31px; border: 1px solid #b8b8b8; border-radius: 3px; background: #fff; display: flex; align-items: center; padding: 0 9px 0 6px; font-size: 16px; }
.inp em { font: bold 13px "Liberation Sans", sans-serif; color: #808080; width: 19px; flex: none; }
.inp u, .sel u { margin-left: auto; text-decoration: none; color: #c0c0c0; font-size: 12px; font-weight: 400; -webkit-text-stroke: .3px #c0c0c0; }
.inp u.deg { margin-top: -2px; font-size: 14px; }
.sel u.near { margin-right: -2px; }
.flip { width: 107px; height: 31px; border: 1px solid #cfcfcf; border-radius: 3px; display: flex; color: #333; }
.flip span { flex: 1; display: flex; align-items: center; justify-content: center; }
.flip span + span { border-left: 1px solid #cfcfcf; }
.unlink { margin-top: 27px; color: #333; }
.sec { height: 31px; border-top: 1px solid #dcdcdc; border-bottom: 1px solid #dcdcdc; background: #fff; font-size: 12px; line-height: 29px; padding: 0 13px 0 12.500px; color: #444; display: flex; justify-content: space-between; }
.sec.shut { background: #ededed; color: #777; height: 30px; border-bottom: none; }
.sec.shut.end { height: 32px; border-bottom: 1px solid #dcdcdc; }
.pbody { padding: 16px 0 0 16px; display: flex; flex-direction: column; gap: 8px; }
.text { height: 212px; }
.fills { height: 142px; }
.prow2 { display: flex; gap: 8px; }
.sel { position: relative; height: 31px; border: 1px solid #b8b8b8; border-radius: 3px; background: #fff; display: flex; align-items: center; padding: 0 35px 0 6px; font-size: 16px; color: #222; }
.sel s { position: absolute; right: 0; top: 1px; width: 26px; bottom: 1px; border-left: 1px solid #b8b8b8; display: flex; justify-content: center; padding-top: 6px; color: #555; text-decoration: none; }
.sel s svg { transform: scale(.85, .95); }
.sel span { margin-left: 6px; }
.sel svg { color: #777; }
.f1 { width: 184px; height: 33px; padding-left: 7px; }
.f2 { width: 100px; height: 33px; font-size: 13px; }
.f3 { width: 142px; }
.wt { margin-left: -1px; }
.inp.color { width: 142px; padding-right: 1px; }
.inp.color em { font-weight: 400; width: 23px; padding-left: 4px; }
.sw { height: 26px; }
.blk { width: 110px; height: 25px; background: #000; }
.bgroup { width: 288px; height: 28px; border: 1px solid #cfcfcf; border-radius: 3px; display: flex; color: #333; }
.bgroup span { flex: 1; display: flex; align-items: center; justify-content: center; }
.bgroup span + span { border-left: 1px solid #cfcfcf; }
.inp.wide { width: 292px; padding-right: 2px; gap: 1px; }
.inp.wide em { width: 22px; }
.s1 { width: 86px; background: #e5e5e5; border: 1px solid #b8b8b8; }
.s2 { width: 85px; background: #444; border: 1px solid #333; }
.s3 { width: 85px; margin-left: 1px; background: #fff; border: 1px solid #c8c8c8; }
.s4 { width: 259px; background: #231f20; }
.opac { display: flex; height: 64px; padding: 16px 0 0 16px; }
.track { width: 179px; height: 5px; border-radius: 2px; background: #b8b8b8; margin-top: 13px; }
.opac svg { margin-top: 7px; }
.inp.op { margin-left: 11px; width: 83px; padding-left: 7px; padding-right: 11px; }
.op u { font-size: 13px; }
.taskbar { height: 50px; background: linear-gradient(90deg, #cfe6ee 0, #d0e6ef 42%, #d3e1ee 62%, #d3dbeb 80%, #d6dcea 100%); display: flex; position: relative; }
.start { width: 60px; display: flex; align-items: center; justify-content: center; }
.tsearch { width: 430px; background: #fff; border: 1px solid #c4c8ca; display: flex; align-items: center; padding-left: 14px; gap: 14px; font: 17.600px "Open Sans", sans-serif; letter-spacing: .05px; color: #333; }
.tk { width: 61px; margin-right: 1.200px; display: flex; align-items: center; justify-content: center; position: relative; flex: none; }
.tk.c { width: 60px; margin: 0; }
.tk.v { width: 60px; margin-right: 3px; }
.run::after, .act::after { content: ""; position: absolute; left: 5px; right: 5px; bottom: 0; height: 3px; background: #0078d7; }
.multi::after { background: linear-gradient(90deg, #0078d7 80%, #65abe3 80%); }
.act { background: #edf5f8; }
.act::after { left: 0; right: 0; }
.tray { margin-left: auto; display: flex; align-items: center; gap: 10.500px; }
.clock { width: 96px; display: flex; flex-direction: column; align-items: center; font: 14.300px/23px "Open Sans", sans-serif; letter-spacing: -.1px; padding-top: 2px; color: #111; }
.nt { width: 60px; height: 50px; padding: 15px 0 0 9px; position: relative; }
.nt::after { content: ""; position: absolute; right: 5px; top: 0; height: 50px; width: 1px; background: #a8adb8; }
.nt i { position: absolute; left: 18px; top: 25px; width: 20px; height: 20px; border-radius: 50%; background: rgba(215, 217, 220, .92); border: 1px solid #888; font: 600 13px/18px "Open Sans", sans-serif; text-align: center; }
.wmark { position: absolute; left: 1554px; top: 922px; color: rgba(130, 130, 130, .52); font-family: "Open Sans", sans-serif; font-size: 24px; line-height: 36px; white-space: nowrap; letter-spacing: 0; }
.wmark p { margin: 0; font-size: 17px; line-height: 24px; letter-spacing: .16px; }
</style>
